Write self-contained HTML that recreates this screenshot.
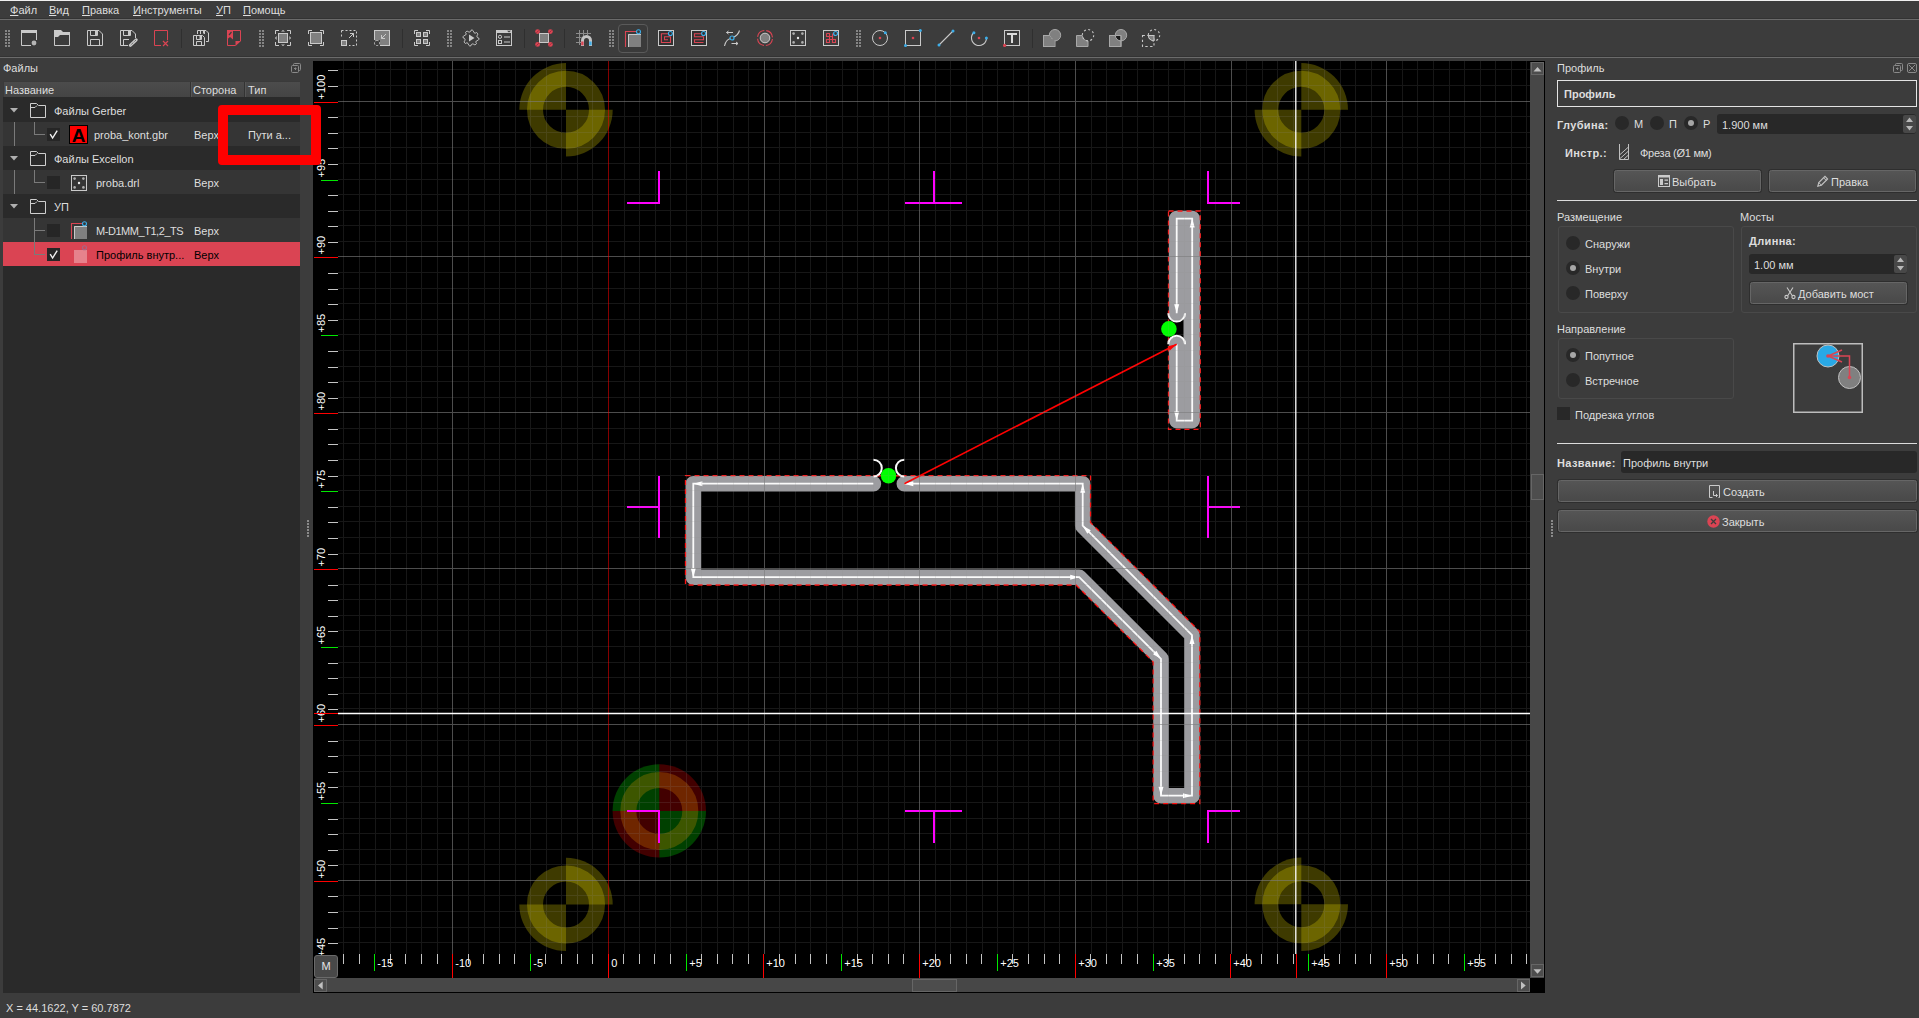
<!DOCTYPE html>
<html lang="ru"><head><meta charset="utf-8"><title>GGEasy</title>
<style>
*{box-sizing:border-box;margin:0;padding:0}
html,body{width:1919px;height:1018px;overflow:hidden;background:#3c3c3c}
body{position:relative;font-family:"Liberation Sans",sans-serif;font-size:11px;color:#dedede;line-height:13px}
.a{position:absolute}
.t{position:absolute;white-space:nowrap;height:13px;line-height:13px}
.b{font-weight:bold}
u{text-decoration:underline;text-underline-offset:1px}
.hl{position:absolute;left:0;width:1919px;height:1px}
.btn{position:absolute;border:1px solid #666;border-radius:2.5px;background:linear-gradient(#555,#494949);box-shadow:0 0 0 1px #2e2e2e}
.edit{position:absolute;background:#282828;border-radius:3px}
.gb{position:absolute;border:1px solid #494949;border-radius:3px}
.rad{position:absolute;width:14px;height:14px;border-radius:50%;background:#282828}
.rad.on::after{content:"";position:absolute;left:4px;top:4px;width:6px;height:6px;border-radius:50%;background:#a6a6a6}
.chk{position:absolute;width:13px;height:13px;background:#262626}
.row{position:absolute;left:3px;width:297px;height:24px}
svg{position:absolute;overflow:visible}
</style></head>
<body>
<div class="hl" style="top:0;background:#f0f0f0"></div>
<div class="t" style="left:10px;top:4px"><u>Ф</u>айл</div>
<div class="t" style="left:49px;top:4px"><u>В</u>ид</div>
<div class="t" style="left:82px;top:4px"><u>П</u>равка</div>
<div class="t" style="left:133px;top:4px"><u>И</u>нструменты</div>
<div class="t" style="left:216px;top:4px"><u>У</u>П</div>
<div class="t" style="left:243px;top:4px"><u>П</u>омощь</div>
<div class="hl" style="top:18px;background:#333"></div><div class="hl" style="top:19px;background:#6b6b6b"></div>
<div class="hl" style="top:56px;background:#333"></div><div class="hl" style="top:57px;background:#6b6b6b"></div>
<svg style="left:5px;top:30px" width="5" height="17" viewBox="0 0 5 17"><g fill="#858585"><rect x="0" y="0" width="2" height="2"/><rect x="3" y="0" width="2" height="2"/><rect x="0" y="3" width="2" height="2"/><rect x="3" y="3" width="2" height="2"/><rect x="0" y="6" width="2" height="2"/><rect x="3" y="6" width="2" height="2"/><rect x="0" y="9" width="2" height="2"/><rect x="3" y="9" width="2" height="2"/><rect x="0" y="12" width="2" height="2"/><rect x="3" y="12" width="2" height="2"/><rect x="0" y="15" width="2" height="2"/><rect x="3" y="15" width="2" height="2"/></g></svg><svg style="left:259px;top:30px" width="5" height="17" viewBox="0 0 5 17"><g fill="#858585"><rect x="0" y="0" width="2" height="2"/><rect x="3" y="0" width="2" height="2"/><rect x="0" y="3" width="2" height="2"/><rect x="3" y="3" width="2" height="2"/><rect x="0" y="6" width="2" height="2"/><rect x="3" y="6" width="2" height="2"/><rect x="0" y="9" width="2" height="2"/><rect x="3" y="9" width="2" height="2"/><rect x="0" y="12" width="2" height="2"/><rect x="3" y="12" width="2" height="2"/><rect x="0" y="15" width="2" height="2"/><rect x="3" y="15" width="2" height="2"/></g></svg><svg style="left:447px;top:30px" width="5" height="17" viewBox="0 0 5 17"><g fill="#858585"><rect x="0" y="0" width="2" height="2"/><rect x="3" y="0" width="2" height="2"/><rect x="0" y="3" width="2" height="2"/><rect x="3" y="3" width="2" height="2"/><rect x="0" y="6" width="2" height="2"/><rect x="3" y="6" width="2" height="2"/><rect x="0" y="9" width="2" height="2"/><rect x="3" y="9" width="2" height="2"/><rect x="0" y="12" width="2" height="2"/><rect x="3" y="12" width="2" height="2"/><rect x="0" y="15" width="2" height="2"/><rect x="3" y="15" width="2" height="2"/></g></svg><svg style="left:609px;top:30px" width="5" height="17" viewBox="0 0 5 17"><g fill="#858585"><rect x="0" y="0" width="2" height="2"/><rect x="3" y="0" width="2" height="2"/><rect x="0" y="3" width="2" height="2"/><rect x="3" y="3" width="2" height="2"/><rect x="0" y="6" width="2" height="2"/><rect x="3" y="6" width="2" height="2"/><rect x="0" y="9" width="2" height="2"/><rect x="3" y="9" width="2" height="2"/><rect x="0" y="12" width="2" height="2"/><rect x="3" y="12" width="2" height="2"/><rect x="0" y="15" width="2" height="2"/><rect x="3" y="15" width="2" height="2"/></g></svg><svg style="left:856px;top:30px" width="5" height="17" viewBox="0 0 5 17"><g fill="#858585"><rect x="0" y="0" width="2" height="2"/><rect x="3" y="0" width="2" height="2"/><rect x="0" y="3" width="2" height="2"/><rect x="3" y="3" width="2" height="2"/><rect x="0" y="6" width="2" height="2"/><rect x="3" y="6" width="2" height="2"/><rect x="0" y="9" width="2" height="2"/><rect x="3" y="9" width="2" height="2"/><rect x="0" y="12" width="2" height="2"/><rect x="3" y="12" width="2" height="2"/><rect x="0" y="15" width="2" height="2"/><rect x="3" y="15" width="2" height="2"/></g></svg><div class="a" style="left:181px;top:29px;width:1px;height:19px;background:#2f2f2f"></div><div class="a" style="left:402px;top:29px;width:1px;height:19px;background:#2f2f2f"></div><div class="a" style="left:524px;top:29px;width:1px;height:19px;background:#2f2f2f"></div><div class="a" style="left:564px;top:29px;width:1px;height:19px;background:#2f2f2f"></div><div class="a" style="left:1032px;top:29px;width:1px;height:19px;background:#2f2f2f"></div><div class="a" style="left:618px;top:24px;width:30px;height:29px;border:1px solid #5a5a5a;border-radius:4px;background:#3a3a3a"></div><svg style="left:21px;top:30px" width="16" height="16" viewBox="0 0 16 16"><path d="M0 0H16V3H0Z" fill="#cacaca" /><path d="M0.5 3V15.5H10 M15.5 3V10" fill="none" stroke="#cacaca" stroke-width="1" /><circle cx="13" cy="13" r="2.4" fill="#cacaca" stroke="none" stroke-width="1" opacity="0.85"/></svg><svg style="left:54px;top:30px" width="16" height="16" viewBox="0 0 16 16"><path d="M0 0H7L9 2H16V5H6L4 7H0Z" fill="#cacaca" /><path d="M0.5 6V15.5H15.5V4" fill="none" stroke="#cacaca" stroke-width="1" /></svg><svg style="left:87px;top:30px" width="16" height="16" viewBox="0 0 16 16"><path d="M0.5 0.5H12L15.5 4V15.5H0.5Z M3.5 0.5V5.5H10.5V0.5 M3.5 15.5V9.5H12.5V15.5" fill="none" stroke="#cacaca" stroke-width="1" /><path d="M8 1H10V5H8Z" fill="#cacaca" /></svg><svg style="left:120px;top:30px" width="16" height="16" viewBox="0 0 16 16"><path d="M8 15.5H0.5V0.5H12L15.5 4V8 M3.5 0.5V5.5H10.5V0.5 M3.5 15.5V9.5H9" fill="none" stroke="#cacaca" stroke-width="1" /><path d="M8 1H10V5H8Z" fill="#cacaca" /><path d="M10.3 15.3L16.2 9.8" fill="none" stroke="#cacaca" stroke-width="3" stroke-linecap="round"/><path d="M10.8 14.9L15.8 10.2" fill="none" stroke="#3c3c3c" stroke-width="1" stroke-dasharray="1 1"/></svg><svg style="left:153px;top:30px" width="16" height="16" viewBox="0 0 16 16"><path d="M8 15.5H1.5V0.5H14.5V10" fill="none" stroke="#da4453" stroke-width="1" /><path d="M10 11L15 16 M15 11L10 16" fill="none" stroke="#da4453" stroke-width="1.2" /></svg><svg style="left:193px;top:30px" width="16" height="16" viewBox="0 0 16 16"><path d="M4.5 4V0.5H13L15.5 3V11.5H13 M7.5 0.5V4 M11.5 0.5V4" fill="none" stroke="#cacaca" stroke-width="1" /><path d="M10 1H12V3.5H10Z" fill="#cacaca" /><path d="M0.5 5.5H9.5L11.5 7.5V15.5H0.5Z M3.5 5.5V9.5H8.5V5.5 M3.5 15.5V11.5H8.5V15.5" fill="none" stroke="#cacaca" stroke-width="1" /><path d="M6.5 6H8V9H6.5Z" fill="#cacaca" /></svg><svg style="left:226px;top:30px" width="16" height="16" viewBox="0 0 16 16"><path d="M1 0H7V9.5L4 7L1 9.5Z" fill="#da4453" /><path d="M3 5L5.5 2" fill="none" stroke="#3c3c3c" stroke-width="1.2" /><path d="M7 0.5H14.5V11 M1.5 9V15.5H9.5" fill="none" stroke="#da4453" stroke-width="1" /><path d="M9.5 16V11H15Z" fill="#da4453" /></svg><svg style="left:275px;top:30px" width="16" height="16" viewBox="0 0 16 16"><path d="M0.5 4V0.5H4 M12 0.5H15.5V4 M15.5 12V15.5H12 M4 15.5H0.5V12" fill="none" stroke="#cacaca" stroke-width="1" /><rect x="3.5" y="3.5" width="9" height="9" fill="#808080" stroke="#cacaca" stroke-width="1" /><path d="M6 1.6L8 0L10 1.6Z M6 14.4L8 16L10 14.4Z M1.6 6L0 8L1.6 10Z M14.4 6L16 8L14.4 10Z" fill="#cacaca" /></svg><svg style="left:308px;top:30px" width="16" height="16" viewBox="0 0 16 16"><path d="M0.5 4V0.5H4 M12 0.5H15.5V4 M15.5 12V15.5H12 M4 15.5H0.5V12" fill="none" stroke="#cacaca" stroke-width="1" /><rect x="2.5" y="2.5" width="11" height="11" fill="#808080" stroke="#cacaca" stroke-width="1" /></svg><svg style="left:341px;top:30px" width="16" height="16" viewBox="0 0 16 16"><path d="M0.5 0.5H15.5V15.5H8 M0.5 0.5V8" fill="none" stroke="#cacaca" stroke-width="1" stroke-dasharray="2 2"/><rect x="0.5" y="10.5" width="5" height="5" fill="#808080" stroke="#cacaca" stroke-width="1" /><path d="M8 8L12.5 3.5 M9 3.5H12.5V7" fill="none" stroke="#cacaca" stroke-width="1" /></svg><svg style="left:374px;top:30px" width="16" height="16" viewBox="0 0 16 16"><rect x="0.5" y="0.5" width="15" height="15" fill="#808080" stroke="#cacaca" stroke-width="1" /><path d="M12 4L7.5 8.5 M7.5 5V8.5H11" fill="none" stroke="#cacaca" stroke-width="1" /><rect x="0" y="10" width="6" height="6" fill="#3c3c3c" stroke="none" stroke-width="1" /><rect x="0.5" y="10.5" width="5" height="5" fill="none" stroke="#cacaca" stroke-width="1" stroke-dasharray="2 1.5" rx="2"/></svg><svg style="left:414px;top:30px" width="16" height="16" viewBox="0 0 16 16"><path d="M0.5 4V0.5H4 M12 0.5H15.5V4 M15.5 12V15.5H12 M4 15.5H0.5V12" fill="none" stroke="#cacaca" stroke-width="1" /><rect x="2.5" y="2.5" width="4" height="4" fill="#808080" stroke="#cacaca" stroke-width="1" /><rect x="9.5" y="2.5" width="4" height="4" fill="#808080" stroke="#cacaca" stroke-width="1" /><rect x="2.5" y="9.5" width="4" height="4" fill="#808080" stroke="#cacaca" stroke-width="1" /><rect x="9.5" y="9.5" width="4" height="4" fill="#808080" stroke="#cacaca" stroke-width="1" /></svg><svg style="left:463px;top:30px" width="16" height="16" viewBox="0 0 16 16"><path d="M15.70 8.00 A1.7 1.7 0 0 1 14.19 10.56 A1.7 1.7 0 0 0 13.44 13.44 A1.7 1.7 0 0 1 10.56 14.19 A1.7 1.7 0 0 0 8.00 15.70 A1.7 1.7 0 0 1 5.44 14.19 A1.7 1.7 0 0 0 2.56 13.44 A1.7 1.7 0 0 1 1.81 10.56 A1.7 1.7 0 0 0 0.30 8.00 A1.7 1.7 0 0 1 1.81 5.44 A1.7 1.7 0 0 0 2.56 2.56 A1.7 1.7 0 0 1 5.44 1.81 A1.7 1.7 0 0 0 8.00 0.30 A1.7 1.7 0 0 1 10.56 1.81 A1.7 1.7 0 0 0 13.44 2.56 A1.7 1.7 0 0 1 14.19 5.44 A1.7 1.7 0 0 0 15.70 8.00Z" fill="none" stroke="#cacaca" stroke-width="1" /><path d="M6 4.5L11.5 8L6 11.5Z" fill="#cacaca" /></svg><svg style="left:496px;top:30px" width="16" height="16" viewBox="0 0 16 16"><path d="M0 0H16V3H0Z" fill="#cacaca" /><rect x="0.5" y="0.5" width="15" height="15" fill="none" stroke="#cacaca" stroke-width="1" /><path d="M11 0.8H15L13 2.6Z" fill="#3c3c3c" /><circle cx="4" cy="6.8" r="1.6" fill="none" stroke="#cacaca" stroke-width="1" /><path d="M8 7H14 M8 12H14" fill="none" stroke="#cacaca" stroke-width="1" /><rect x="2.5" y="10.5" width="3" height="3" fill="none" stroke="#cacaca" stroke-width="1" /></svg><svg style="left:576px;top:30px" width="16" height="16" viewBox="0 0 16 16"><path d="M3.5 0V15 M7.5 0V6 M11.5 0V5 M0 3.5H15 M0 7.5H5.5 M0 12.5H5" fill="none" stroke="#8c8c8c" stroke-width="1" /><path d="M6.5 16V10.5A4 4 0 0 1 14.5 10.5V16" fill="none" stroke="#c4c4c4" stroke-width="3" /><rect x="5.2" y="11.5" width="2.4" height="3.8" fill="#da4453" stroke="none" stroke-width="1" /><rect x="13.2" y="11.5" width="2.4" height="3.8" fill="#3daee9" stroke="none" stroke-width="1" /></svg><svg style="left:658px;top:30px" width="16" height="16" viewBox="0 0 16 16"><rect x="0.5" y="0.5" width="15" height="15" fill="#303030" stroke="#cacaca" stroke-width="1" /><path d="M10.5 3.7H3.4V12.5H12.5V6.8H6.5V9.8H10" fill="none" stroke="#da4453" stroke-width="1.1" /><circle cx="12.4" cy="3.5" r="2" fill="#303030" stroke="#3daee9" stroke-width="1.1" /></svg><svg style="left:691px;top:30px" width="16" height="16" viewBox="0 0 16 16"><rect x="0.5" y="0.5" width="15" height="15" fill="#303030" stroke="#cacaca" stroke-width="1" /><path d="M10.2 3.7H3.5V6.8H12.5V9.8H3.5V12.5H12.5" fill="none" stroke="#da4453" stroke-width="1.1" /><circle cx="12.6" cy="3.5" r="2" fill="#303030" stroke="#3daee9" stroke-width="1.1" /></svg><svg style="left:724px;top:30px" width="16" height="16" viewBox="0 0 16 16"><path d="M0.5 16C2 8 6 9 8 8S14 6 15.5 0.5" fill="none" stroke="#cacaca" stroke-width="1.1" /><circle cx="8" cy="8" r="2" fill="#3c3c3c" stroke="#3daee9" stroke-width="1.2" /><path d="M2.5 2.5H9 M4.5 1L2.5 2.5L4.5 4 M7.5 13.5H14 M12 12L14 13.5L12 15" fill="none" stroke="#cacaca" stroke-width="1" /></svg><svg style="left:757px;top:30px" width="16" height="16" viewBox="0 0 16 16"><circle cx="8" cy="8" r="7.5" fill="none" stroke="#da4453" stroke-width="1.1" stroke-dasharray="9.8 2" stroke-dashoffset="-1"/><circle cx="8" cy="8" r="4.8" fill="#808080" stroke="#cacaca" stroke-width="1" /></svg><svg style="left:790px;top:30px" width="16" height="16" viewBox="0 0 16 16"><rect x="0.5" y="0.5" width="15" height="15" fill="none" stroke="#cacaca" stroke-width="1" /><circle cx="3.6" cy="3.6" r="1.3" fill="#b0b0b0" stroke="none" stroke-width="1" /><circle cx="12.4" cy="3.6" r="1.3" fill="#b0b0b0" stroke="none" stroke-width="1" /><circle cx="3.6" cy="12.4" r="1.3" fill="#b0b0b0" stroke="none" stroke-width="1" /><circle cx="12.4" cy="12.4" r="1.3" fill="#b0b0b0" stroke="none" stroke-width="1" /><circle cx="8" cy="8" r="1.2" fill="#e8e8e8" stroke="none" stroke-width="1" /></svg><svg style="left:823px;top:30px" width="16" height="16" viewBox="0 0 16 16"><rect x="0.5" y="0.5" width="15" height="15" fill="none" stroke="#cacaca" stroke-width="1" /><path d="M3.5 3.5H6.5V12.5H3.5V9.5H12.5V12.5H9.5V3.5 M3.5 3.5V6.5H10" fill="none" stroke="#da4453" stroke-width="1.1" /><circle cx="12.6" cy="3.5" r="2" fill="#3c3c3c" stroke="#3daee9" stroke-width="1.2" /></svg><svg style="left:872px;top:30px" width="16" height="16" viewBox="0 0 16 16"><circle cx="8" cy="8" r="7.5" fill="none" stroke="#cacaca" stroke-width="1" /><circle cx="8" cy="8" r="1.3" fill="#da4453" stroke="none" stroke-width="1" /><circle cx="13.3" cy="2.7" r="1.5" fill="#3daee9" stroke="none" stroke-width="1" /></svg><svg style="left:905px;top:30px" width="16" height="16" viewBox="0 0 16 16"><rect x="0.5" y="0.5" width="15" height="15" fill="none" stroke="#cacaca" stroke-width="1" /><circle cx="8" cy="8" r="1.3" fill="#da4453" stroke="none" stroke-width="1" /><circle cx="15.3" cy="0.6" r="1.5" fill="#3daee9" stroke="none" stroke-width="1" /><circle cx="0.5" cy="15.4" r="1.5" fill="#3daee9" stroke="none" stroke-width="1" /></svg><svg style="left:938px;top:30px" width="16" height="16" viewBox="0 0 16 16"><path d="M1 15L15 1" fill="none" stroke="#cacaca" stroke-width="1.1" /><circle cx="1" cy="15" r="1.5" fill="#3daee9" stroke="none" stroke-width="1" /><circle cx="15" cy="1" r="1.5" fill="#3daee9" stroke="none" stroke-width="1" /></svg><svg style="left:971px;top:30px" width="16" height="16" viewBox="0 0 16 16"><path d="M2.7 2.7A7.5 7.5 0 1 0 15.5 8" fill="none" stroke="#cacaca" stroke-width="1.1" /><circle cx="8" cy="8" r="1.3" fill="#da4453" stroke="none" stroke-width="1" /><circle cx="2.9" cy="2.8" r="1.5" fill="#3daee9" stroke="none" stroke-width="1" /><circle cx="15.4" cy="8" r="1.5" fill="#3daee9" stroke="none" stroke-width="1" /></svg><svg style="left:1004px;top:30px" width="16" height="16" viewBox="0 0 16 16"><rect x="0.5" y="0.5" width="15" height="15" fill="none" stroke="#cacaca" stroke-width="1" /><path d="M3 3H13V5H9V13H7V5H3Z" fill="#dcdcdc" /><circle cx="0.6" cy="15.4" r="1.6" fill="#da4453" stroke="none" stroke-width="1" /></svg><svg style="left:625px;top:30px" width="16" height="17" viewBox="0 0 16 17"><path d="M0.5 17V1.5H11" fill="none" stroke="#da4453" stroke-width="1.1" /><rect x="3" y="4" width="13" height="13" fill="#808080" stroke="none" stroke-width="1" /><path d="M3.5 17V4.5H16" fill="none" stroke="#cacaca" stroke-width="1" /><circle cx="13.5" cy="1.7" r="2" fill="none" stroke="#3daee9" stroke-width="1.1" /></svg><svg style="left:535px;top:29px" width="18" height="18" viewBox="0 0 18 18"><rect x="4.5" y="4.5" width="9" height="9" fill="#808080" stroke="#cacaca" stroke-width="1" /><circle cx="2.6" cy="2.6" r="2.4" fill="#da4453" stroke="none" stroke-width="1" /><path d="M1.3 3.9000000000000004L3.9000000000000004 1.3" fill="none" stroke="#9a2f3b" stroke-width="0.9" /><circle cx="15.4" cy="2.6" r="2.4" fill="#da4453" stroke="none" stroke-width="1" /><path d="M14.1 3.9000000000000004L16.7 1.3" fill="none" stroke="#9a2f3b" stroke-width="0.9" /><circle cx="2.6" cy="15.4" r="2.4" fill="#da4453" stroke="none" stroke-width="1" /><path d="M1.3 16.7L3.9000000000000004 14.1" fill="none" stroke="#9a2f3b" stroke-width="0.9" /><circle cx="15.4" cy="15.4" r="2.4" fill="#da4453" stroke="none" stroke-width="1" /><path d="M14.1 16.7L16.7 14.1" fill="none" stroke="#9a2f3b" stroke-width="0.9" /></svg><svg style="left:1043px;top:29px" width="18" height="18" viewBox="0 0 18 18"><rect x="0.5" y="6.5" width="11.5" height="11" fill="#808080" stroke="#a8a8a8" stroke-width="1" /><circle cx="12" cy="6.2" r="5.7" fill="#808080" stroke="#a8a8a8" stroke-width="1" /><rect x="1" y="7" width="10.5" height="10" fill="#808080" stroke="none" stroke-width="1" /><path d="M7.5 7.5L10 11" fill="none" stroke="#b8b8b8" stroke-width="1" stroke-dasharray="1 1.2"/></svg><svg style="left:1076px;top:29px" width="18" height="18" viewBox="0 0 18 18"><path d="M0.5 6.5H6.3A5.7 5.7 0 0 0 12 11.9V17.5H0.5Z" fill="#808080" stroke="#a8a8a8"/><circle cx="12" cy="6.2" r="5.7" fill="none" stroke="#c8c8c8" stroke-width="1.1" stroke-dasharray="2 2.4"/></svg><svg style="left:1109px;top:29px" width="18" height="18" viewBox="0 0 18 18"><rect x="0.5" y="6.5" width="11.5" height="11" fill="#808080" stroke="#a8a8a8" stroke-width="1" /><circle cx="12" cy="6.2" r="5.7" fill="#808080" stroke="#a8a8a8" stroke-width="1" /><path d="M12 6.5H6.3A5.7 5.7 0 0 0 12 11.9Z" fill="#1a1a1a" stroke="#a8a8a8"/><path d="M12 6.5V17.5H0.5V6.5H6.3" fill="none" stroke="#a8a8a8" stroke-width="1" /></svg><svg style="left:1142px;top:29px" width="18" height="18" viewBox="0 0 18 18"><rect x="0.5" y="6.5" width="11.5" height="11" fill="none" stroke="#c8c8c8" stroke-width="1.1" stroke-dasharray="2.4 2.4"/><circle cx="12" cy="6.2" r="5.7" fill="none" stroke="#c8c8c8" stroke-width="1.1" stroke-dasharray="2 2.4"/><path d="M12 6.5H6.3A5.7 5.7 0 0 0 12 11.9Z" fill="#808080" stroke="#c8c8c8"/></svg>
<div class="t " style="left:3px;top:62px;">Файлы</div><svg style="left:291px;top:63px" width="11" height="11" viewBox="0 0 11 11"><g fill="none" stroke="#8a8a8a" stroke-width="1"><rect x="0.5" y="2.5" width="7" height="7" rx="1"/><path d="M2.5 2.5V1.5Q2.5 0.5 3.5 0.5H8.5Q9.5 0.5 9.5 1.5V6.5Q9.5 7.5 8.5 7.5H7.5"/><path d="M3 5.5H5.5M4.5 4.5V7"/></g></svg><div class="a" style="left:3px;top:81px;width:297px;height:912px;background:#2a2a2a"></div>
<div class="a" style="left:3px;top:81px;width:297px;height:16px;background:linear-gradient(#4c4c4c,#444444);box-shadow:inset 1px 1px 0 #3a3a3a"></div><div class="a" style="left:190px;top:82px;width:1px;height:15px;background:#333"></div><div class="a" style="left:191px;top:82px;width:1px;height:15px;background:#555"></div><div class="a" style="left:244px;top:82px;width:1px;height:15px;background:#333"></div><div class="a" style="left:245px;top:82px;width:1px;height:15px;background:#555"></div><div class="t " style="left:5px;top:84px;">Название</div><div class="t " style="left:193px;top:84px;">Сторона</div><div class="t " style="left:248px;top:84px;">Тип</div>
<div class="row" style="top:122px;background:#353535"></div><div class="row" style="top:170px;background:#353535"></div><div class="row" style="top:218px;background:#353535"></div><div class="row" style="top:242px;background:#da4453"></div>
<svg style="left:0;top:0" width="320" height="300" viewBox="0 0 320 300"><g fill="none" stroke="#7a7a7a" stroke-width="1" shape-rendering="crispEdges"><path d="M14.5 122V146 M34.5 122V134.5H45"/><path d="M14.5 170V194 M34.5 170V182.5H45"/><path d="M34.5 218V254.5H45 M34.5 230.5H45"/></g></svg>
<svg style="left:10px;top:108px" width="8" height="5" viewBox="0 0 8 5"><path d="M0 0H8L4 4.5Z" fill="#b0b0b0"/></svg><svg style="left:30px;top:103px" width="16" height="16" viewBox="0 0 16 16"><path d="M0.5 0.5H6.5L8.5 2.5H15.5V14.5H0.5Z M0.5 4.5H5L7 2.5" fill="none" stroke="#cfcfcf" stroke-width="1"/></svg><div class="t " style="left:54px;top:105px;">Файлы Gerber</div><svg style="left:10px;top:156px" width="8" height="5" viewBox="0 0 8 5"><path d="M0 0H8L4 4.5Z" fill="#b0b0b0"/></svg><svg style="left:30px;top:151px" width="16" height="16" viewBox="0 0 16 16"><path d="M0.5 0.5H6.5L8.5 2.5H15.5V14.5H0.5Z M0.5 4.5H5L7 2.5" fill="none" stroke="#cfcfcf" stroke-width="1"/></svg><div class="t " style="left:54px;top:153px;">Файлы Excellon</div><svg style="left:10px;top:204px" width="8" height="5" viewBox="0 0 8 5"><path d="M0 0H8L4 4.5Z" fill="#b0b0b0"/></svg><svg style="left:30px;top:199px" width="16" height="16" viewBox="0 0 16 16"><path d="M0.5 0.5H6.5L8.5 2.5H15.5V14.5H0.5Z M0.5 4.5H5L7 2.5" fill="none" stroke="#cfcfcf" stroke-width="1"/></svg><div class="t " style="left:54px;top:201px;">УП</div>
<div class="chk" style="left:47px;top:128px"></div><svg style="left:47px;top:128px" width="13" height="13" viewBox="0 0 13 13"><path d="M3.2 6.2L5.6 10L10.2 2.6" fill="none" stroke="#f0f0f0" stroke-width="1.4"/></svg><div class="a" style="left:69px;top:125px;width:19px;height:19px;background:#ff0000;border:1px solid #000"></div><div class="t b" style="left:69px;top:126px;width:19px;text-align:center;color:#000;font-size:19px;height:19px;line-height:19px">A</div><div class="t " style="left:94px;top:129px;">proba_kont.gbr</div><div class="t " style="left:194px;top:129px;">Верх</div><div class="t " style="left:248px;top:129px;">Пути а...</div>
<div class="chk" style="left:47px;top:176px"></div><svg style="left:71px;top:175px" width="16" height="16" viewBox="0 0 16 16"><rect x="0.5" y="0.5" width="15" height="15" fill="none" stroke="#cacaca" stroke-width="1" /><circle cx="3.6" cy="3.6" r="1.3" fill="#b0b0b0" stroke="none" stroke-width="1" /><circle cx="12.4" cy="3.6" r="1.3" fill="#b0b0b0" stroke="none" stroke-width="1" /><circle cx="3.6" cy="12.4" r="1.3" fill="#b0b0b0" stroke="none" stroke-width="1" /><circle cx="12.4" cy="12.4" r="1.3" fill="#b0b0b0" stroke="none" stroke-width="1" /><circle cx="8" cy="8" r="1.2" fill="#e8e8e8" stroke="none" stroke-width="1" /></svg><div class="t " style="left:96px;top:177px;">proba.drl</div><div class="t " style="left:194px;top:177px;">Верх</div>
<div class="chk" style="left:47px;top:224px"></div><svg style="left:71px;top:222px" width="16" height="17" viewBox="0 0 16 17"><path d="M0.5 17V1.5H11" fill="none" stroke="#da4453" stroke-width="1.1" /><rect x="3" y="4" width="13" height="13" fill="#808080" stroke="none" stroke-width="1" /><path d="M3.5 17V4.5H16" fill="none" stroke="#cacaca" stroke-width="1" /><circle cx="13.5" cy="1.7" r="2" fill="none" stroke="#3daee9" stroke-width="1.1" /></svg><div class="t " style="left:96px;top:225px;letter-spacing:-0.45px">M-D1MM_T1,2_TS</div><div class="t " style="left:194px;top:225px;">Верх</div>
<div class="chk" style="left:47px;top:248px"></div><svg style="left:47px;top:248px" width="13" height="13" viewBox="0 0 13 13"><path d="M3.2 6.2L5.6 10L10.2 2.6" fill="none" stroke="#f0f0f0" stroke-width="1.4"/></svg><svg style="left:71px;top:246px;opacity:0.33" width="16" height="17" viewBox="0 0 16 17"><rect x="3" y="4" width="13" height="13" fill="#ffffff" stroke="none" stroke-width="1" /><path d="M3.5 17V4.5H16" fill="none" stroke="#fff" stroke-width="1" /><circle cx="13.5" cy="1.7" r="2" fill="none" stroke="#3daee9" stroke-width="1.1" /></svg><div class="t " style="left:96px;top:249px;color:#000">Профиль внутр...</div><div class="t " style="left:194px;top:249px;color:#000">Верх</div>
<div class="a" style="left:218px;top:105px;width:103px;height:60px;border:10px solid #ff0000;border-radius:4px;z-index:5"></div>
<svg style="left:307px;top:520px" width="2" height="18" viewBox="0 0 2 18"><g fill="#8a8a8a"><rect x="0" y="0" width="2" height="2"/><rect x="0" y="3" width="2" height="2"/><rect x="0" y="6" width="2" height="2"/><rect x="0" y="9" width="2" height="2"/><rect x="0" y="12" width="2" height="2"/><rect x="0" y="15" width="2" height="2"/></g></svg>
<div class="a" style="left:313px;top:61px;width:1232px;height:932px;background:#000"></div>
<svg style="left:313px;top:61px" width="1217" height="917" viewBox="313 61 1217 917">
<defs><clipPath id="cv"><rect x="313" y="61" width="1217" height="917"/></clipPath><clipPath id="gr"><rect x="338" y="61" width="1192" height="893"/></clipPath></defs>
<g clip-path="url(#gr)">
<path d="M566 109.8 L519.3 109.8 A46.7 46.7 0 0 1 566 63.1 Z" fill="rgba(255,240,0,0.245)"/><path d="M566 109.8 L612.7 109.8 A46.7 46.7 0 0 1 566 156.5 Z" fill="rgba(255,240,0,0.245)"/><circle cx="566" cy="109.8" r="31" fill="none" stroke="rgba(255,240,0,0.245)" stroke-width="16"/><path d="M1301.3 109.8 L1301.3 63.1 A46.7 46.7 0 0 1 1348 109.8 Z" fill="rgba(255,240,0,0.245)"/><path d="M1301.3 109.8 L1301.3 156.5 A46.7 46.7 0 0 1 1254.6 109.8 Z" fill="rgba(255,240,0,0.245)"/><circle cx="1301.3" cy="109.8" r="31" fill="none" stroke="rgba(255,240,0,0.245)" stroke-width="16"/><path d="M566 904.4 L566 857.7 A46.7 46.7 0 0 1 612.7 904.4 Z" fill="rgba(255,240,0,0.245)"/><path d="M566 904.4 L566 951.1 A46.7 46.7 0 0 1 519.3 904.4 Z" fill="rgba(255,240,0,0.245)"/><circle cx="566" cy="904.4" r="31" fill="none" stroke="rgba(255,240,0,0.245)" stroke-width="16"/><path d="M1301.3 904.3 L1254.6 904.3 A46.7 46.7 0 0 1 1301.3 857.6 Z" fill="rgba(255,240,0,0.245)"/><path d="M1301.3 904.3 L1348 904.3 A46.7 46.7 0 0 1 1301.3 951 Z" fill="rgba(255,240,0,0.245)"/><circle cx="1301.3" cy="904.3" r="31" fill="none" stroke="rgba(255,240,0,0.245)" stroke-width="16"/><path d="M659.3 810.9 L706 810.9 A46.7 46.7 0 0 1 659.3 857.6 Z" fill="rgba(0,255,0,0.25)"/><path d="M659.3 810.9 L659.3 857.6 A46.7 46.7 0 0 1 612.6 810.9 Z" fill="rgba(255,0,0,0.26)"/><path d="M659.3 810.9 L612.6 810.9 A46.7 46.7 0 0 1 659.3 764.2 Z" fill="rgba(0,255,0,0.25)"/><path d="M659.3 810.9 L659.3 764.2 A46.7 46.7 0 0 1 706 810.9 Z" fill="rgba(255,0,0,0.26)"/><circle cx="659.3" cy="810.9" r="31" fill="none" stroke="rgba(255,160,0,0.24)" stroke-width="16"/>
<path d="M659 171V203 M627 203H660 M934 171V203 M905 203H962 M1208 171V203 M1207 203H1240 M659 476V538 M627 507H659 M1208 476V538 M1208 507H1240 M627 811H660 M659 811V843 M905 811H962 M934 811V843 M1207 811H1240 M1208 811V843" stroke="#ff00ff" stroke-width="2" fill="none"/>
<path d="M873.4 483.7 L693.3 483.7 L693.3 577.2 L1079.2 577.2 L1161 658.8 L1161 795.7 L1192 795.7 L1192 635 L1082.7 525.7 L1082.7 483.7 L904.3 483.7" fill="none" stroke="#9c9ca0" stroke-width="15.56" stroke-linejoin="round" stroke-linecap="round"/>
<path d="M1176.7 344.2 L1176.7 420.6 L1192.2 420.6 L1192.2 218.6 L1176.7 218.6 L1176.7 313.2" fill="none" stroke="#9c9ca0" stroke-width="15.56" stroke-linejoin="round" stroke-linecap="round"/>
<rect x="1183.5" y="218.6" width="2" height="202" fill="#9c9ca0"/>
<path d="M685.5 475.6 L1090.5 475.6 L1090.5 522.5 L1199.8 631.6 L1199.8 803.6 L1153.2 803.6 L1153.2 662 L1076 585 L685.5 585Z" fill="none" stroke="#ff1010" stroke-width="1.3" stroke-dasharray="5 4"/>
<rect x="1168.5" y="211" width="31.8" height="218.4" fill="none" stroke="#ff1010" stroke-width="1.3" stroke-dasharray="5 4"/>
<path d="M873 475.8H904" stroke="#ff1010" stroke-width="1.3"/><path d="M873.4 483.7 L693.3 483.7 L693.3 577.2 L1079.2 577.2 L1161 658.8 L1161 795.7 L1192 795.7 L1192 635 L1082.7 525.7 L1082.7 483.7 L904.3 483.7 M1176.7 344.2 L1176.7 420.6 L1192.2 420.6 L1192.2 218.6 L1176.7 218.6 L1176.7 313.2" fill="none" stroke="#fafafa" stroke-width="1.8" stroke-linejoin="miter"/>
<polygon points="693.3,483.7 702.3,481.2 702.3,486.2" fill="#fff"/><polygon points="693.3,577.2 690.8,568.2 695.8,568.2" fill="#fff"/><polygon points="1079.2,577.2 1070.2,579.7 1070.2,574.7" fill="#fff"/><polygon points="1161,658.8 1152.9,654.2 1156.4,650.7" fill="#fff"/><polygon points="1161,795.7 1158.5,786.7 1163.5,786.7" fill="#fff"/><polygon points="1192,795.7 1183,798.2 1183,793.2" fill="#fff"/><polygon points="1192,635 1194.5,644 1189.5,644" fill="#fff"/><polygon points="1082.7,525.7 1090.8,530.3 1087.3,533.8" fill="#fff"/><polygon points="1082.7,483.7 1085.2,492.7 1080.2,492.7" fill="#fff"/><polygon points="904.3,483.7 913.3,481.2 913.3,486.2" fill="#fff"/><polygon points="1176.7,420.6 1174.2,411.6 1179.2,411.6" fill="#fff"/><polygon points="1192.2,218.6 1194.7,227.6 1189.7,227.6" fill="#fff"/><polygon points="1176.7,313.2 1174.2,304.2 1179.2,304.2" fill="#fff"/>
<path d="M904.3 483.7 L1176.7 344.2" stroke="#ff0000" stroke-width="1.6" fill="none"/><polygon points="1176.7,344.2 1169.8,350.4 1167.6,346.2" fill="#ff0000"/>
<path d="M873.4 459.7 A8.4 8.4 0 0 1 873.4 476.5 M904.3 459.7 A8.4 8.4 0 0 0 904.3 476.5 M1168.3 313.2 A8.4 8.4 0 0 0 1185.1 313.2 M1168.3 344.2 A8.4 8.4 0 0 1 1185.1 344.2" fill="none" stroke="#fafafa" stroke-width="2"/>
<circle cx="888.5" cy="475.8" r="7.7" fill="#00ff00"/><circle cx="1168.9" cy="328.9" r="7.8" fill="#00ff00"/>
<path d="M343.5 61V954M359.5 61V954M375.5 61V954M390.5 61V954M406.5 61V954M421.5 61V954M437.5 61V954M468.5 61V954M484.5 61V954M499.5 61V954M515.5 61V954M530.5 61V954M546.5 61V954M561.5 61V954M577.5 61V954M592.5 61V954M624.5 61V954M639.5 61V954M655.5 61V954M670.5 61V954M686.5 61V954M701.5 61V954M717.5 61V954M733.5 61V954M748.5 61V954M779.5 61V954M795.5 61V954M810.5 61V954M826.5 61V954M842.5 61V954M857.5 61V954M873.5 61V954M888.5 61V954M904.5 61V954M935.5 61V954M950.5 61V954M966.5 61V954M982.5 61V954M997.5 61V954M1013.5 61V954M1028.5 61V954M1044.5 61V954M1059.5 61V954M1091.5 61V954M1106.5 61V954M1122.5 61V954M1137.5 61V954M1153.5 61V954M1168.5 61V954M1184.5 61V954M1200.5 61V954M1215.5 61V954M1246.5 61V954M1262.5 61V954M1277.5 61V954M1293.5 61V954M1308.5 61V954M1324.5 61V954M1340.5 61V954M1355.5 61V954M1371.5 61V954M1402.5 61V954M1417.5 61V954M1433.5 61V954M1449.5 61V954M1464.5 61V954M1480.5 61V954M1495.5 61V954M1511.5 61V954M1526.5 61V954M338 942.5H1530M338 927.5H1530M338 911.5H1530M338 895.5H1530M338 864.5H1530M338 849.5H1530M338 833.5H1530M338 818.5H1530M338 802.5H1530M338 786.5H1530M338 771.5H1530M338 755.5H1530M338 740.5H1530M338 708.5H1530M338 693.5H1530M338 677.5H1530M338 662.5H1530M338 646.5H1530M338 630.5H1530M338 615.5H1530M338 599.5H1530M338 584.5H1530M338 553.5H1530M338 537.5H1530M338 521.5H1530M338 506.5H1530M338 490.5H1530M338 475.5H1530M338 459.5H1530M338 443.5H1530M338 428.5H1530M338 397.5H1530M338 381.5H1530M338 366.5H1530M338 350.5H1530M338 334.5H1530M338 319.5H1530M338 303.5H1530M338 288.5H1530M338 272.5H1530M338 241.5H1530M338 225.5H1530M338 210.5H1530M338 194.5H1530M338 179.5H1530M338 163.5H1530M338 147.5H1530M338 132.5H1530M338 116.5H1530M338 85.5H1530M338 69.5H1530" stroke="rgba(140,140,140,0.16)" stroke-width="1" fill="none" shape-rendering="crispEdges"/>
<path d="M452.5 61V954M764.5 61V954M919.5 61V954M1075.5 61V954M1231.5 61V954M1386.5 61V954M338 880.5H1530M338 724.5H1530M338 568.5H1530M338 412.5H1530M338 256.5H1530M338 101.5H1530" stroke="rgba(125,125,125,0.62)" stroke-width="1" fill="none" shape-rendering="crispEdges"/>
<path d="M608.5 61V954" stroke="rgba(255,0,0,0.52)" stroke-width="1" fill="none" shape-rendering="crispEdges"/>
</g>
<g clip-path="url(#cv)"><path d="M343.5 954V964M359.5 954V964M390.5 954V964M405.5 954V964M421.5 954V964M437.5 954V964M468.5 954V964M483.5 954V964M499.5 954V964M514.5 954V964M545.5 954V964M561.5 954V964M577.5 954V964M592.5 954V964M623.5 954V964M639.5 954V964M654.5 954V964M670.5 954V964M701.5 954V964M717.5 954V964M732.5 954V964M748.5 954V964M779.5 954V964M795.5 954V964M810.5 954V964M826.5 954V964M857.5 954V964M872.5 954V964M888.5 954V964M903.5 954V964M935.5 954V964M950.5 954V964M966.5 954V964M981.5 954V964M1012.5 954V964M1028.5 954V964M1044.5 954V964M1059.5 954V964M1090.5 954V964M1106.5 954V964M1121.5 954V964M1137.5 954V964M1168.5 954V964M1184.5 954V964M1199.5 954V964M1215.5 954V964M1246.5 954V964M1261.5 954V964M1277.5 954V964M1293.5 954V964M1324.5 954V964M1339.5 954V964M1355.5 954V964M1370.5 954V964M1402.5 954V964M1417.5 954V964M1433.5 954V964M1448.5 954V964M1479.5 954V964M1495.5 954V964M1511.5 954V964M1526.5 954V964M328 943.5H338M328 928.5H338M328 912.5H338M328 896.5H338M328 865.5H338M328 850.5H338M328 834.5H338M328 819.5H338M328 787.5H338M328 772.5H338M328 756.5H338M328 741.5H338M328 709.5H338M328 694.5H338M328 678.5H338M328 663.5H338M328 631.5H338M328 616.5H338M328 600.5H338M328 585.5H338M328 554.5H338M328 538.5H338M328 522.5H338M328 507.5H338M328 476.5H338M328 460.5H338M328 444.5H338M328 429.5H338M328 398.5H338M328 382.5H338M328 367.5H338M328 351.5H338M328 320.5H338M328 304.5H338M328 289.5H338M328 273.5H338M328 242.5H338M328 226.5H338M328 211.5H338M328 195.5H338M328 164.5H338M328 148.5H338M328 133.5H338M328 117.5H338M328 86.5H338M328 70.5H338" stroke="#c4c4c4" stroke-width="1" fill="none" shape-rendering="crispEdges"/>
<path d="M374.5 954V971M530.5 954V971M686.5 954V971M841.5 954V971M997.5 954V971M1153.5 954V971M1308.5 954V971M1464.5 954V971M321 803.5H338M321 647.5H338M321 491.5H338M321 335.5H338M321 180.5H338" stroke="#00e800" stroke-width="1" fill="none" shape-rendering="crispEdges"/>
<path d="M452.5 954V978M608.5 954V978M763.5 954V978M919.5 954V978M1075.5 954V978M1230.5 954V978M1386.5 954V978M314 881.5H338M314 725.5H338M314 569.5H338M314 413.5H338M314 257.5H338M314 102.5H338" stroke="#ff0000" stroke-width="1" fill="none" shape-rendering="crispEdges"/>
<g font-family="Liberation Sans, sans-serif" font-size="11" fill="#fff"><text x="377.3" y="967">-15</text><text x="455.3" y="967">-10</text><text x="533.3" y="967">-5</text><text x="611.3" y="967">0</text><text x="689.3" y="967">+5</text><text x="766.3" y="967">+10</text><text x="844.3" y="967">+15</text><text x="922.3" y="967">+20</text><text x="1000.3" y="967">+25</text><text x="1078.3" y="967">+30</text><text x="1156.3" y="967">+35</text><text x="1233.3" y="967">+40</text><text x="1311.3" y="967">+45</text><text x="1389.3" y="967">+50</text><text x="1467.3" y="967">+55</text><text transform="translate(324.5 956.5) rotate(-90)">+45</text><text transform="translate(324.5 878.5) rotate(-90)">+50</text><text transform="translate(324.5 800.5) rotate(-90)">+55</text><text transform="translate(324.5 722.5) rotate(-90)">+60</text><text transform="translate(324.5 644.5) rotate(-90)">+65</text><text transform="translate(324.5 566.5) rotate(-90)">+70</text><text transform="translate(324.5 488.5) rotate(-90)">+75</text><text transform="translate(324.5 410.5) rotate(-90)">+80</text><text transform="translate(324.5 332.5) rotate(-90)">+85</text><text transform="translate(324.5 254.5) rotate(-90)">+90</text><text transform="translate(324.5 177.5) rotate(-90)">+95</text><text transform="translate(324.5 99.5) rotate(-90)">+100</text></g>
<path d="M1295.8 61V954 M338 713.5H1530" stroke="#fff" stroke-width="1.3" fill="none"/><path d="M1296.5 954V978 M314 713.5H338" stroke="#ff0000" stroke-width="1" fill="none" shape-rendering="crispEdges"/>
</g></svg>
<div class="a" style="left:314px;top:955px;width:24px;height:23px;background:#484848;border:1px solid #6a6a6a;border-radius:3px"></div><div class="t" style="left:314px;top:960px;width:24px;text-align:center;color:#e6e6e6">M</div>
<div class="a" style="left:1530px;top:62px;width:14px;height:916px;background:#474747"></div><div class="a" style="left:314px;top:978px;width:1216px;height:14px;background:#474747"></div>
<div class="a" style="left:1531px;top:62px;width:13px;height:13px;background:#4d4d4d;border:1px solid #666"></div><div class="a" style="left:1531px;top:964px;width:13px;height:13px;background:#4d4d4d;border:1px solid #666"></div><div class="a" style="left:1531px;top:474px;width:13px;height:26px;background:#4d4d4d;border:1px solid #666"></div><div class="a" style="left:314px;top:979px;width:13px;height:13px;background:#4d4d4d;border:1px solid #666"></div><div class="a" style="left:1517px;top:979px;width:13px;height:13px;background:#4d4d4d;border:1px solid #666"></div><div class="a" style="left:912px;top:979px;width:45px;height:13px;background:#4d4d4d;border:1px solid #666"></div>
<svg style="left:0;top:0" width="1919" height="1018" viewBox="0 0 1919 1018"><g fill="#c0c0c0"><path d="M1533.5 71.5L1537.5 67L1541.5 71.5Z"/><path d="M1533.5 969.3H1541.5L1537.5 973.8Z"/><path d="M322.7 981.5V989.5L318 985.5Z"/><path d="M1521 981.5L1525.7 985.5L1521 989.5Z"/></g></svg>
<div class="t " style="left:1557px;top:62px;">Профиль</div><svg style="left:1893px;top:63px" width="11" height="11" viewBox="0 0 11 11"><g fill="none" stroke="#8a8a8a" stroke-width="1"><rect x="0.5" y="2.5" width="7" height="7" rx="1"/><path d="M2.5 2.5V1.5Q2.5 0.5 3.5 0.5H8.5Q9.5 0.5 9.5 1.5V6.5Q9.5 7.5 8.5 7.5H7.5"/><path d="M3 5.5H5.5M4.5 4.5V7"/></g></svg><svg style="left:1907px;top:63px" width="11" height="11" viewBox="0 0 11 11"><g fill="none" stroke="#8a8a8a" stroke-width="1"><rect x="0.5" y="0.5" width="9" height="9" rx="1.5"/><path d="M2 2L8 8M8 2L2 8"/></g></svg><div class="a" style="left:1557px;top:80px;width:360px;height:27px;border:1px solid #e4e4e4"></div><div class="t b" style="left:1564px;top:88px;">Профиль</div>
<div class="t b" style="left:1557px;top:119px;letter-spacing:0.35px">Глубина:</div><div class="rad" style="left:1615px;top:116px"></div><div class="t " style="left:1634px;top:118px;">М</div><div class="rad" style="left:1650px;top:116px"></div><div class="t " style="left:1669px;top:118px;">П</div><div class="rad on" style="left:1684px;top:116px"></div><div class="t " style="left:1703px;top:118px;">Р</div><div class="edit" style="left:1717px;top:114px;width:199px;height:20px"></div><div class="t " style="left:1722px;top:119px;">1.900 мм</div><div class="a" style="left:1903px;top:115px;width:13px;height:18px;background:#484848;border-radius:2px"></div><svg style="left:1903px;top:115px" width="13" height="18" viewBox="0 0 13 18"><path d="M3 7L6.5 2.5L10 7Z M3 11L10 11L6.5 15.5Z" fill="#b8b8b8"/></svg>
<div class="t b" style="left:1565px;top:147px;letter-spacing:0.35px">Инстр.:</div><svg style="left:1618px;top:144px" width="12" height="16" viewBox="0 0 12 16"><path d="M1.5 0V15.5H10.5V0 M1.5 11L10.5 3 M1.5 15L10.5 7 M5.5 15.5L10.5 11" fill="none" stroke="#c0c0c0" stroke-width="1" /></svg><div class="t " style="left:1640px;top:147px;letter-spacing:-0.25px">Фреза (Ø1 мм)</div>
<div class="btn" style="left:1614px;top:170px;width:147px;height:22px"></div><svg style="left:1658px;top:175px" width="12" height="12" viewBox="0 0 12 12"><path d="M0 0H12V2.5H0Z" fill="#cacaca" /><rect x="0.5" y="0.5" width="11" height="11" fill="none" stroke="#cacaca" stroke-width="1" /><path d="M2 4H5V10H2Z M6.5 4.5H10V5.8H6.5Z M6.5 8H10V9.3H6.5Z" fill="#cacaca" /></svg><div class="t " style="left:1672px;top:176px;">Выбрать</div><div class="btn" style="left:1769px;top:170px;width:147px;height:22px"></div><svg style="left:1817px;top:175px" width="12" height="12" viewBox="0 0 12 12"><path d="M0.8 11.2L1.8 7.6L8 1.4L10.6 4L4.4 10.2Z" fill="none" stroke="#c4c4c4" stroke-width="1.1" /><path d="M6.6 2.8L9.2 5.4 M1.8 7.6L4.4 10.2" fill="none" stroke="#c4c4c4" stroke-width="1" /></svg><div class="t " style="left:1831px;top:176px;">Правка</div>
<div class="a" style="left:1557px;top:200px;width:360px;height:1px;background:#dcdcdc"></div><div class="t " style="left:1557px;top:211px;">Размещение</div><div class="t " style="left:1740px;top:211px;">Мосты</div><div class="gb" style="left:1558px;top:226px;width:176px;height:87px"></div><div class="gb" style="left:1741px;top:226px;width:176px;height:87px"></div>
<div class="rad" style="left:1566px;top:236px"></div><div class="t " style="left:1585px;top:238px;">Снаружи</div><div class="rad on" style="left:1566px;top:261px"></div><div class="t " style="left:1585px;top:263px;">Внутри</div><div class="rad" style="left:1566px;top:286px"></div><div class="t " style="left:1585px;top:288px;">Поверху</div><div class="t b" style="left:1749px;top:235px;letter-spacing:0.35px">Длинна:</div><div class="edit" style="left:1749px;top:254px;width:158px;height:20px"></div><div class="t " style="left:1754px;top:259px;">1.00 мм</div><div class="a" style="left:1894px;top:255px;width:13px;height:18px;background:#484848;border-radius:2px"></div><svg style="left:1894px;top:255px" width="13" height="18" viewBox="0 0 13 18"><path d="M3 7L6.5 2.5L10 7Z M3 11L10 11L6.5 15.5Z" fill="#b8b8b8"/></svg><div class="btn" style="left:1750px;top:282px;width:157px;height:22px"></div><svg style="left:1784px;top:287px" width="12" height="12" viewBox="0 0 12 12"><path d="M3 0.5L8.5 9 M9 0.5L3.5 9" fill="none" stroke="#cacaca" stroke-width="1.1" /><circle cx="2.5" cy="10" r="1.6" fill="none" stroke="#cacaca" stroke-width="1.1" /><circle cx="9.5" cy="10" r="1.6" fill="none" stroke="#cacaca" stroke-width="1.1" /></svg><div class="t " style="left:1798px;top:288px;">Добавить мост</div>
<div class="t " style="left:1557px;top:323px;">Направление</div><div class="gb" style="left:1558px;top:338px;width:176px;height:61px"></div><div class="rad on" style="left:1566px;top:348px"></div><div class="t " style="left:1585px;top:350px;">Попутное</div><div class="rad" style="left:1566px;top:373px"></div><div class="t " style="left:1585px;top:375px;">Встречное</div><div class="chk" style="left:1557px;top:407px;background:#282828"></div><div class="t " style="left:1575px;top:409px;">Подрезка углов</div>
<svg style="left:1793px;top:343px" width="70" height="70" viewBox="0 0 70 70"><rect x="0.75" y="0.75" width="68.5" height="68.5" fill="none" stroke="#bdbdbd" stroke-width="1.5" /><circle cx="35" cy="13" r="11" fill="#29a9e6" stroke="#c0c0c0" stroke-width="1" /><circle cx="56.5" cy="34.5" r="11" fill="#808080" stroke="#c0c0c0" stroke-width="1" /><path d="M56.5 34.5V13H35 M49 7L35 13L49 19" fill="none" stroke="#da4453" stroke-width="1.5" /><circle cx="35" cy="13" r="1.8" fill="#da4453" stroke="none" stroke-width="1" /><circle cx="56.5" cy="34.5" r="1.8" fill="#da4453" stroke="none" stroke-width="1" /></svg><div class="a" style="left:1557px;top:443px;width:360px;height:1px;background:#dcdcdc"></div><div class="t b" style="left:1557px;top:457px;letter-spacing:0.35px">Название:</div><div class="edit" style="left:1621px;top:451px;width:296px;height:22px"></div><div class="t " style="left:1623px;top:457px;">Профиль внутри</div>
<div class="btn" style="left:1558px;top:480px;width:359px;height:22px"></div><svg style="left:1709px;top:485px" width="12" height="13" viewBox="0 0 12 13"><path d="M3.5 12.5H0.5V0.5H10.5V12.5H9.5" fill="none" stroke="#cacaca" stroke-width="1" /><path d="M4.5 6V10.5H8.5 M7 9L8.5 10.5L7 12" fill="none" stroke="#cacaca" stroke-width="1" /></svg><div class="t " style="left:1723px;top:486px;">Создать</div><div class="btn" style="left:1558px;top:510px;width:359px;height:22px"></div><svg style="left:1707px;top:515px" width="13" height="13" viewBox="0 0 13 13"><circle cx="6.5" cy="6.5" r="6.2" fill="#da4453" stroke="none" stroke-width="1" /><path d="M4 4L9 9M9 4L4 9" fill="none" stroke="#3c3c3c" stroke-width="1.3" /></svg><div class="t " style="left:1722px;top:516px;">Закрыть</div>
<svg style="left:1551px;top:520px" width="2" height="18" viewBox="0 0 2 18"><g fill="#8a8a8a"><rect x="0" y="0" width="2" height="2"/><rect x="0" y="3" width="2" height="2"/><rect x="0" y="6" width="2" height="2"/><rect x="0" y="9" width="2" height="2"/><rect x="0" y="12" width="2" height="2"/><rect x="0" y="15" width="2" height="2"/></g></svg>
<div class="t" style="left:6px;top:1002px">X = 44.1622, Y = 60.7872</div>
</body></html>
